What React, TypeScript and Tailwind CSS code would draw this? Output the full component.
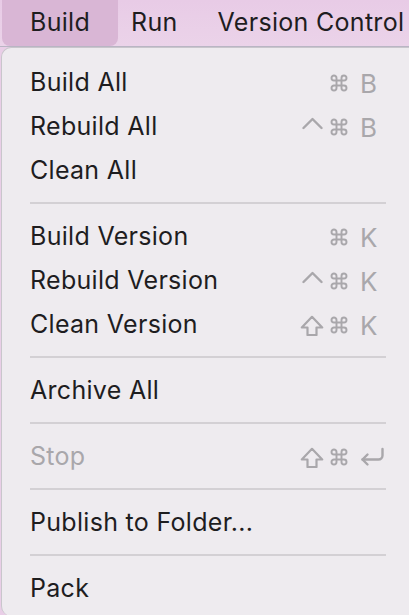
import React from "react";

type Mod = "ctrl" | "shift";

type Item = {
  label: string;
  mods?: Mod[];
  cmd?: boolean;
  keyName?: string;
  ret?: boolean;
  disabled?: boolean;
};

const groups: Item[][] = [
  [
    { label: "Build All", cmd: true, keyName: "B" },
    { label: "Rebuild All", mods: ["ctrl"], cmd: true, keyName: "B" },
    { label: "Clean All" },
  ],
  [
    { label: "Build Version", cmd: true, keyName: "K" },
    { label: "Rebuild Version", mods: ["ctrl"], cmd: true, keyName: "K" },
    { label: "Clean Version", mods: ["shift"], cmd: true, keyName: "K" },
  ],
  [{ label: "Archive All" }],
  [{ label: "Stop", mods: ["shift"], cmd: true, ret: true, disabled: true }],
  [{ label: "Publish to Folder..." }],
  [{ label: "Pack" }],
];

const CmdIcon = () => (
  <svg width="20" height="20" viewBox="0 0 24 24" fill="none" stroke="currentColor" strokeWidth="2.3" strokeLinecap="round" strokeLinejoin="round">
    <path d="M15 6v12a3 3 0 1 0 3-3H6a3 3 0 1 0 3 3V6a3 3 0 1 0-3 3h12a3 3 0 1 0-3-3" />
  </svg>
);

const CtrlIcon = () => (
  <svg width="21" height="20" viewBox="0 0 21 20" fill="none" stroke="currentColor" strokeWidth="2.4" strokeLinecap="round" strokeLinejoin="round">
    <path d="M1.5 11 10.5 2l9 9" />
  </svg>
);

const ShiftIcon = () => (
  <svg width="24" height="21" viewBox="0 0 24 21" fill="none" stroke="currentColor" strokeWidth="2.2" strokeLinejoin="round">
    <path d="M7.5 20v-7.5H1.8L12 1.8l10.2 10.7h-5.7V20z" />
  </svg>
);

const ReturnIcon = () => (
  <svg width="25" height="20" viewBox="0 0 25 20" fill="none" stroke="currentColor" strokeWidth="2.4" strokeLinecap="round" strokeLinejoin="round">
    <path d="M22.5 2v6.5a4 4 0 0 1-4 4H2.5" />
    <path d="m7.5 7.5-5 5 5 5" />
  </svg>
);

const Shortcut = ({ item }: { item: Item }) => {
  if (!item.cmd) return null;
  return (
    <div className="flex items-center text-[#a9a7ab]">
      <div className="flex w-[29px] justify-start">
        {item.mods?.includes("ctrl") && (
          <span className="ml-[2px]">
            <CtrlIcon />
          </span>
        )}
        {item.mods?.includes("shift") && <ShiftIcon />}
      </div>
      <CmdIcon />
      <div className="ml-[11px] flex w-[26px] items-center">
        {item.ret ? <ReturnIcon /> : <span className="text-[26px]">{item.keyName}</span>}
      </div>
    </div>
  );
};

export default function App() {
  return (
    <div
      className="h-[615px] w-[409px] overflow-hidden bg-[#e9cee7] text-[25px] tracking-[0.3px] text-[#1e1d1f]"
      style={{ fontFamily: "Inter, 'Liberation Sans', sans-serif" }}
    >
      <div className="flex h-[47px] items-start border-b border-[#b9b5c4] bg-gradient-to-b from-[#e8cbe6] to-[#ebd3e9]">
        <div className="ml-[2px] flex h-[46px] w-[116px] items-center rounded-b-[8px] bg-[#d9b6d5] pl-[28px]">
          Build
        </div>
        <div className="ml-[13px] flex h-[46px] items-center">Run</div>
        <div className="ml-[40px] flex h-[46px] items-center whitespace-nowrap">Version Control</div>
      </div>

      <div className="ml-[1px] w-[440px] rounded-tl-[10px] rounded-bl-[10px] border-l border-t border-[#c9c6cc] bg-[#eeebef] pt-[13px] pb-[5px]">
        {groups.map((group, gi) => (
          <div key={gi}>
            {gi > 0 && (
              <div className="pl-[28px] pt-[9px] pb-[11px]">
                <div className="h-[2px] w-[356px] bg-[#d3d0d4]" />
              </div>
            )}
            {group.map((item) => (
              <div key={item.label} className="flex h-[44px] items-center pl-[28px]">
                <div className={`w-[270px] ${item.disabled ? "text-[#a9a7ab]" : ""}`}>{item.label}</div>
                <Shortcut item={item} />
              </div>
            ))}
          </div>
        ))}
      </div>
    </div>
  );
}
